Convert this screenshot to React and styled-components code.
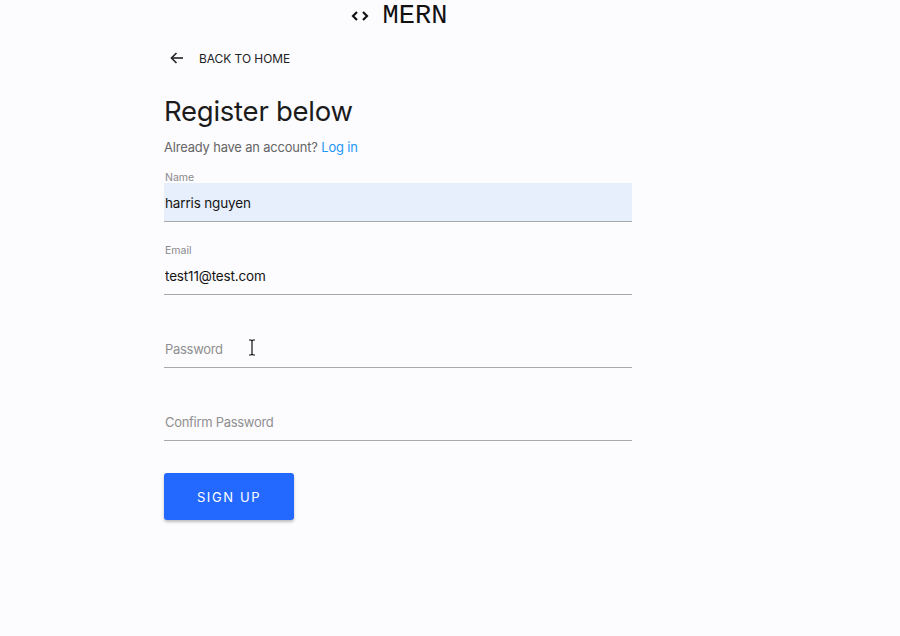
import React from "react";
import styled, { createGlobalStyle } from "styled-components";

const GlobalStyle = createGlobalStyle`
  html, body {
    margin: 0;
    padding: 0;
    background: #fcfbfe;
    font-family: Inter, Roboto, "Liberation Sans", sans-serif;
  }
`;

const Page = styled.div`
  width: 900px;
  height: 636px;
  position: relative;
  overflow: hidden;
`;

const Brand = styled.div`
  display: flex;
  align-items: center;
  justify-content: center;
  gap: 14px;
  width: 798px;
  height: 32px;
  font-family: "Liberation Mono", "Courier New", monospace;
  font-size: 27px;
  color: #111;
`;

const Column = styled.div`
  width: 468px;
  margin-left: 164px;
  display: flex;
  flex-direction: column;
`;

const BackLink = styled.a`
  display: flex;
  align-items: center;
  gap: 15px;
  margin-top: 15px;
  margin-left: 6px;
  height: 22px;
  font-size: 11.9px;
  color: #222;
  text-transform: uppercase;
  text-decoration: none;
`;

const Title = styled.h1`
  margin: 23px 0 0;
  font-size: 27.5px;
  font-weight: 400;
  line-height: 38px;
  letter-spacing: -0.25px;
  color: #1b1b1b;
`;

const Hint = styled.p`
  margin: 8px 0 0;
  font-size: 12.9px;
  line-height: 20px;
  letter-spacing: -0.15px;
  color: #666;
`;

const Link = styled.a`
  color: #2196f3;
  text-decoration: none;
`;

const Form = styled.form`
  display: flex;
  flex-direction: column;
  margin-top: 15px;
`;

const Field = styled.label`
  display: flex;
  flex-direction: column;
  height: 73px;
`;

const Caption = styled.span`
  height: 10px;
  padding-left: 1px;
  font-size: 10.5px;
  line-height: 10px;
  color: #8a8a8a;
`;

const Input = styled.input`
  box-sizing: border-box;
  height: 39px;
  padding: 1px 0 0 1px;
  margin: 0;
  border: 0;
  border-bottom: 1.5px solid #a8a8a8;
  background: ${(p) => (p.$filled ? "#e7effd" : "transparent")};
  font-family: Inter, Roboto, "Liberation Sans", sans-serif;
  font-size: 13.5px;
  letter-spacing: -0.15px;
  color: #151515;
  outline: none;

  &::placeholder {
    font-size: 13px;
    letter-spacing: -0.3px;
    color: #8f8f8f;
  }
`;

const SubmitButton = styled.button`
  align-self: flex-start;
  width: 130px;
  height: 47px;
  margin-top: 8px;
  border: 0;
  border-radius: 3px;
  background: #2469ff;
  color: #fff;
  font-family: Inter, Roboto, "Liberation Sans", sans-serif;
  font-size: 13px;
  letter-spacing: 1.6px;
  text-transform: uppercase;
  box-shadow: 0 2px 3px rgba(0, 0, 0, 0.25);
`;

const Cursor = styled.svg`
  position: absolute;
  left: 248px;
  top: 339px;
`;

const CodeIcon = () => (
  <svg width="18" height="14" viewBox="0 0 18 14" fill="none" stroke="#111" strokeWidth="2.2">
    <path d="M6 3 L2 7 L6 11" />
    <path d="M12 3 L16 7 L12 11" />
  </svg>
);

const ArrowLeft = () => (
  <svg width="14" height="12" viewBox="0 0 14 12" fill="none" stroke="#222" strokeWidth="1.6">
    <path d="M13 6 H1.5" />
    <path d="M6.5 1 L1.5 6 L6.5 11" />
  </svg>
);

const fields = [
  { label: "Name", value: "harris nguyen", filled: true },
  { label: "Email", value: "test11@test.com" },
  { placeholder: "Password", type: "password" },
  { placeholder: "Confirm Password", type: "password" },
];

export default function App() {
  return (
    <Page>
      <GlobalStyle />
      <Brand>
        <CodeIcon />
        <span>MERN</span>
      </Brand>
      <Column>
        <BackLink href="#">
          <ArrowLeft />
          Back to home
        </BackLink>
        <Title>Register below</Title>
        <Hint>
          Already have an account? <Link href="#">Log in</Link>
        </Hint>
        <Form onSubmit={(e) => e.preventDefault()}>
          {fields.map((f, i) => (
            <Field key={i}>
              <Caption>{f.label || ""}</Caption>
              <Input
                type={f.type || "text"}
                defaultValue={f.value}
                placeholder={f.placeholder}
                $filled={f.filled}
              />
            </Field>
          ))}
          <SubmitButton type="submit">Sign up</SubmitButton>
        </Form>
      </Column>
      <Cursor width="8" height="17" viewBox="0 0 8 17" fill="none" stroke="#111" strokeWidth="1.2">
        <path d="M1 1 H3 L4 2 L5 1 H7 M4 2 V15 M1 16 H3 L4 15 L5 16 H7" />
      </Cursor>
    </Page>
  );
}
